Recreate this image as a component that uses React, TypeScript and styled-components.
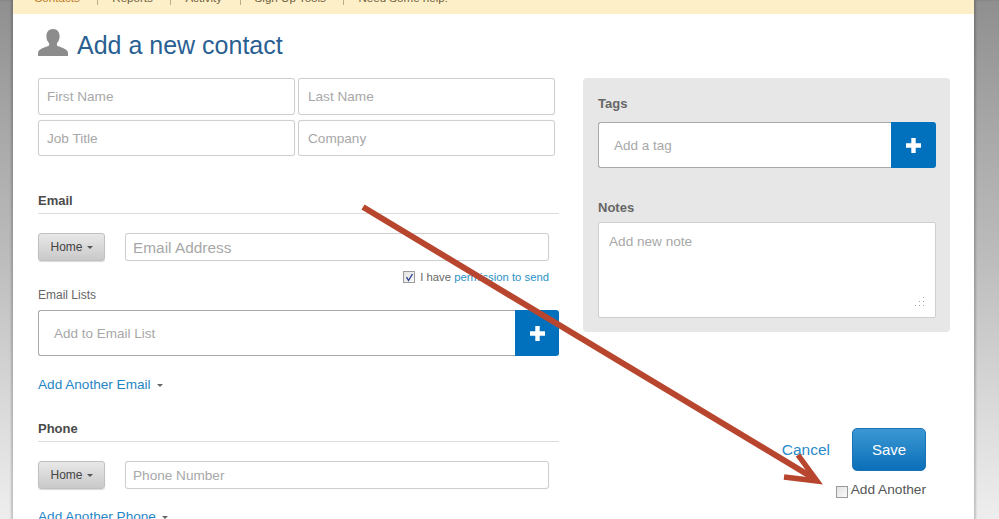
import React from "react";
import styled, { createGlobalStyle } from "styled-components";

const Global = createGlobalStyle`
  html, body { margin: 0; padding: 0; height: 100%; overflow: hidden; background: #fff; }
  body { font-family: "Liberation Sans", Arial, sans-serif; }
  input::placeholder, textarea::placeholder { color: #a8a8a8; opacity: 1; }
`;

const Frame = styled.div`
  position: relative;
  width: 999px;
  height: 519px;
  overflow: hidden;
  display: grid;
  grid-template-columns: 13px 961px 25px;
`;
const Gutter = styled.div<{ $side: "left" | "right" }>`
  background: linear-gradient(180deg, #8f8f8f 0%, #a8a8a8 25%, #bdbdbd 50%, #dcdcdc 80%, #efefef 100%);
  box-shadow: inset ${(p) => (p.$side === "left" ? "-2px" : "2px")} 0 2px rgba(0, 0, 0, 0.18);
`;
const Main = styled.main`
  background: #fff;
  display: flex;
  flex-direction: column;
  min-width: 0;
`;
const Nav = styled.nav`
  height: 14px;
  flex: none;
  background: #fdf0c9;
  overflow: hidden;
  display: flex;
  align-items: flex-end;
  padding: 0 0 9px 21px;
  box-sizing: border-box;
`;
const NavItem = styled.span<{ $active?: boolean; $first?: boolean }>`
  font-size: 11.6px;
  line-height: 14px;
  flex: none;
  color: ${(p) => (p.$active ? "#bd7a26" : "#6f5f3c")};
  padding: 0 17.5px 0 ${(p) => (p.$first ? 0 : 14)}px;
  border-right: 1px solid #b9ad8c;
  &:last-child { border-right: 0; }
`;
const Body = styled.div`
  display: flex;
  padding: 0 24px 0 25px;
  gap: 24px;
`;
const Left = styled.section`
  width: 521px;
  flex: none;
`;
const Right = styled.aside`
  width: 367px;
  flex: none;
  padding-top: 64px;
`;
const Title = styled.div`
  height: 64px;
  display: flex;
  align-items: flex-start;
  padding-top: 15px;
  box-sizing: border-box;
  gap: 9px;
`;
const Heading = styled.h1`
  margin: 0;
  font-weight: 400;
  font-size: 25px;
  line-height: 32px;
  color: #2a5f92;
`;
const NameGrid = styled.div`
  display: grid;
  grid-template-columns: 257px 257px;
  grid-template-rows: 37px 36px;
  column-gap: 3px;
  row-gap: 5px;
  width: 517px;
`;
const Field = styled.input<{ $size?: number; $pad?: number; $h?: number; $shift?: number }>`
  display: block;
  width: 100%;
  height: ${(p) => p.$h ?? 28}px;
  box-sizing: border-box;
  border: 1px solid #cfcfcf;
  border-radius: 3px;
  background: #fff;
  outline: none;
  box-shadow: 0 0 1px rgba(0, 0, 0, 0.12);
  font-family: inherit;
  font-size: ${(p) => p.$size ?? 14}px;
  padding: ${(p) => p.$shift ?? 0}px 0 0 ${(p) => p.$pad ?? 7}px;
`;
const Section = styled.div<{ $top: number }>`
  margin-top: ${(p) => p.$top}px;
`;
const SectionHead = styled.h2`
  margin: 0;
  font-size: 13px;
  line-height: 16px;
  font-weight: 700;
  color: #4a4a4a;
  padding-bottom: 4px;
  border-bottom: 1px solid #dcdcdc;
`;
const ContactRow = styled.div`
  display: flex;
  gap: 20px;
  margin-top: 19px;
  width: 511px;
`;
const HomeButton = styled.button`
  width: 67px;
  height: 28px;
  flex: none;
  border: 1px solid #c0c0c0;
  border-radius: 3px;
  background: linear-gradient(180deg, #e8e8e8, #c9c9c9);
  box-shadow: 0 1px 1px rgba(0, 0, 0, 0.15);
  color: #444;
  font-family: inherit;
  font-size: 12px;
  display: flex;
  align-items: center;
  justify-content: center;
  gap: 4px;
  padding: 0;
`;
const Caret = styled.i<{ $color?: string }>`
  display: inline-block;
  width: 0;
  height: 0;
  border-left: 3px solid transparent;
  border-right: 3px solid transparent;
  border-top: 3px solid ${(p) => p.$color ?? "#555"};
`;
const Permission = styled.div`
  display: flex;
  justify-content: flex-end;
  align-items: center;
  gap: 5px;
  width: 511px;
  margin-top: 9px;
  height: 14px;
  font-size: 11.3px;
  color: #666;
`;
const Blue = styled.span`
  color: #2a92c4;
`;
const CheckBox = styled.span`
  width: 10px;
  height: 10px;
  flex: none;
  border: 1px solid #9a9a9a;
  background: linear-gradient(135deg, #e2e2e2, #fbfbfb);
  display: inline-flex;
  align-items: center;
  justify-content: center;
`;
const SmallLabel = styled.div`
  margin-top: 4px;
  font-size: 12px;
  line-height: 14px;
  color: #666;
`;
const AddGroup = styled.div<{ $h: number }>`
  display: flex;
  height: ${(p) => p.$h}px;
`;
const ListGroup = styled(AddGroup)`
  margin-top: 8px;
`;
const AddField = styled.input<{ $shift: number }>`
  flex: 1;
  min-width: 0;
  box-sizing: border-box;
  border: 1px solid #a9a9a9;
  border-right: 0;
  border-radius: 3px 0 0 3px;
  background: #fff;
  outline: none;
  font-family: inherit;
  font-size: 13.5px;
  padding: ${(p) => p.$shift}px 0 0 15px;
`;
const PlusButton = styled.button<{ $w: number }>`
  width: ${(p) => p.$w}px;
  flex: none;
  border: 0;
  padding: 0;
  background: #0271bd;
  border-radius: 0 3px 3px 0;
  display: flex;
  align-items: center;
  justify-content: center;
`;
const AddAnother = styled.div<{ $top: number }>`
  margin-top: ${(p) => p.$top}px;
  display: flex;
  align-items: center;
  gap: 6px;
  font-size: 13.6px;
  line-height: 16px;
  color: #1f86c6;
`;
const Panel = styled.div`
  height: 254px;
  box-sizing: border-box;
  background: #e7e7e7;
  border-radius: 4px;
  padding: 18px 14px 0 15px;
`;
const PanelLabel = styled.div<{ $top?: number }>`
  font-size: 13px;
  line-height: 16px;
  font-weight: 700;
  color: #666;
  margin-top: ${(p) => p.$top ?? 0}px;
`;
const TagGroup = styled(AddGroup)`
  margin-top: 10px;
`;
const NoteBox = styled.div`
  position: relative;
  margin-top: 6px;
  height: 96px;
`;
const Note = styled.textarea`
  display: block;
  width: 100%;
  height: 100%;
  box-sizing: border-box;
  resize: none;
  border: 1px solid #cfcfcf;
  border-radius: 2px;
  background: #fff;
  outline: none;
  font-family: inherit;
  font-size: 13.6px;
  padding: 11px 10px;
`;
const Grip = styled.svg`
  position: absolute;
  right: 11px;
  bottom: 11px;
`;
const Footer = styled.div`
  margin: 96px 24px 0 0;
  display: flex;
  flex-direction: column;
  align-items: flex-end;
`;
const Actions = styled.div`
  display: flex;
  align-items: center;
  gap: 22px;
`;
const Cancel = styled.span`
  font-size: 15.5px;
  color: #2a8ac8;
`;
const Save = styled.button`
  width: 74px;
  height: 43px;
  border: 1px solid #1a72b4;
  border-radius: 5px;
  background: linear-gradient(180deg, #3b98d3, #0b6fb8);
  color: #fff;
  font-family: inherit;
  font-size: 15px;
  padding: 0;
`;
const AddMore = styled.div`
  display: flex;
  align-items: flex-start;
  gap: 3px;
  margin-top: 11px;
  font-size: 13.7px;
  line-height: 16px;
  color: #555;
`;
const MoreBox = styled(CheckBox)`
  margin-top: 4px;
`;
const Arrow = styled.svg`
  position: absolute;
  inset: 0;
  pointer-events: none;
`;

const Plus = () => (
  <svg width="17" height="17" viewBox="0 0 17 17">
    <path d="M6.3 1h4.4v5.3H16v4.4h-5.3V16H6.3v-5.3H1V6.3h5.3z" fill="#fff" />
  </svg>
);

export default function App() {
  return (
    <Frame>
      <Global />
      <Gutter $side="left" />
      <Main>
        <Nav>
          <NavItem $first $active>Contacts</NavItem>
          <NavItem>Reports</NavItem>
          <NavItem>Activity</NavItem>
          <NavItem>Sign Up Tools</NavItem>
          <NavItem>Need Some help!</NavItem>
        </Nav>
        <Body>
          <Left>
            <Title>
              <svg width="30" height="27" viewBox="0 0 30 27">
                <path d="M15 0c4.4 0 6.6 3.2 6.6 7.2 0 2.900-1 5.300-2.700 7v2.300c3 1.700 11.100 3.300 11.100 7.500V27H0v-3c0-4.200 8-5.800 11.100-7.500v-2.300c-1.700-1.700-2.700-4.100-2.700-7C8.400 3.200 10.600 0 15 0z" fill="#8c8c8c" />
              </svg>
              <Heading>Add a new contact</Heading>
            </Title>
            <NameGrid>
              <Field $h={37} $pad={8} $size={13.6} placeholder="First Name" />
              <Field $h={37} $pad={9} $size={13.6} placeholder="Last Name" />
              <Field $h={36} $pad={8} $size={13.6} placeholder="Job Title" />
              <Field $h={36} $pad={9} $size={13.6} placeholder="Company" />
            </NameGrid>
            <Section $top={37}>
              <SectionHead>Email</SectionHead>
              <ContactRow>
                <HomeButton>Home <Caret /></HomeButton>
                <Field $size={15.4} $shift={1} placeholder="Email Address" />
              </ContactRow>
              <Permission>
                <CheckBox>
                  <svg width="9" height="9" viewBox="0 0 9 9">
                    <path d="M1.500 4l2 3.500L7.500 1" fill="none" stroke="#2d3f8f" strokeWidth="1.400" />
                  </svg>
                </CheckBox>
                <span>I have <Blue>permission to send</Blue></span>
              </Permission>
              <SmallLabel>Email Lists</SmallLabel>
              <ListGroup $h={46}>
                <AddField $shift={0} placeholder="Add to Email List" />
                <PlusButton $w={44}><Plus /></PlusButton>
              </ListGroup>
              <AddAnother $top={21}>Add Another Email <Caret $color="#666" /></AddAnother>
            </Section>
            <Section $top={28}>
              <SectionHead>Phone</SectionHead>
              <ContactRow>
                <HomeButton>Home <Caret /></HomeButton>
                <Field $size={13.6} placeholder="Phone Number" />
              </ContactRow>
              <AddAnother $top={20}>Add Another Phone <Caret $color="#666" /></AddAnother>
            </Section>
          </Left>
          <Right>
            <Panel>
              <PanelLabel>Tags</PanelLabel>
              <TagGroup $h={46}>
                <AddField $shift={1} placeholder="Add a tag" />
                <PlusButton $w={45}><Plus /></PlusButton>
              </TagGroup>
              <PanelLabel $top={32}>Notes</PanelLabel>
              <NoteBox>
                <Note placeholder="Add new note" />
                <Grip width="11" height="11" viewBox="0 0 11 11" fill="#a8a8a8">
                  <rect x="9" y="1" width="1" height="1" />
                  <rect x="9" y="5" width="1" height="1" />
                  <rect x="5" y="5" width="1" height="1" />
                  <rect x="9" y="9" width="1" height="1" />
                  <rect x="5" y="9" width="1" height="1" />
                  <rect x="1" y="9" width="1" height="1" />
                </Grip>
              </NoteBox>
            </Panel>
            <Footer>
              <Actions>
                <Cancel>Cancel</Cancel>
                <Save>Save</Save>
              </Actions>
              <AddMore>
                <MoreBox />
                <span>Add Another</span>
              </AddMore>
            </Footer>
          </Right>
        </Body>
      </Main>
      <Gutter $side="right" />
      <Arrow width="999" height="519" viewBox="0 0 999 519">
        <path d="M363 207L815 479" fill="none" stroke="#b8462f" strokeWidth="6" />
        <path d="M798 455L817 481L784 477" fill="none" stroke="#b8462f" strokeWidth="5.500" />
      </Arrow>
    </Frame>
  );
}
